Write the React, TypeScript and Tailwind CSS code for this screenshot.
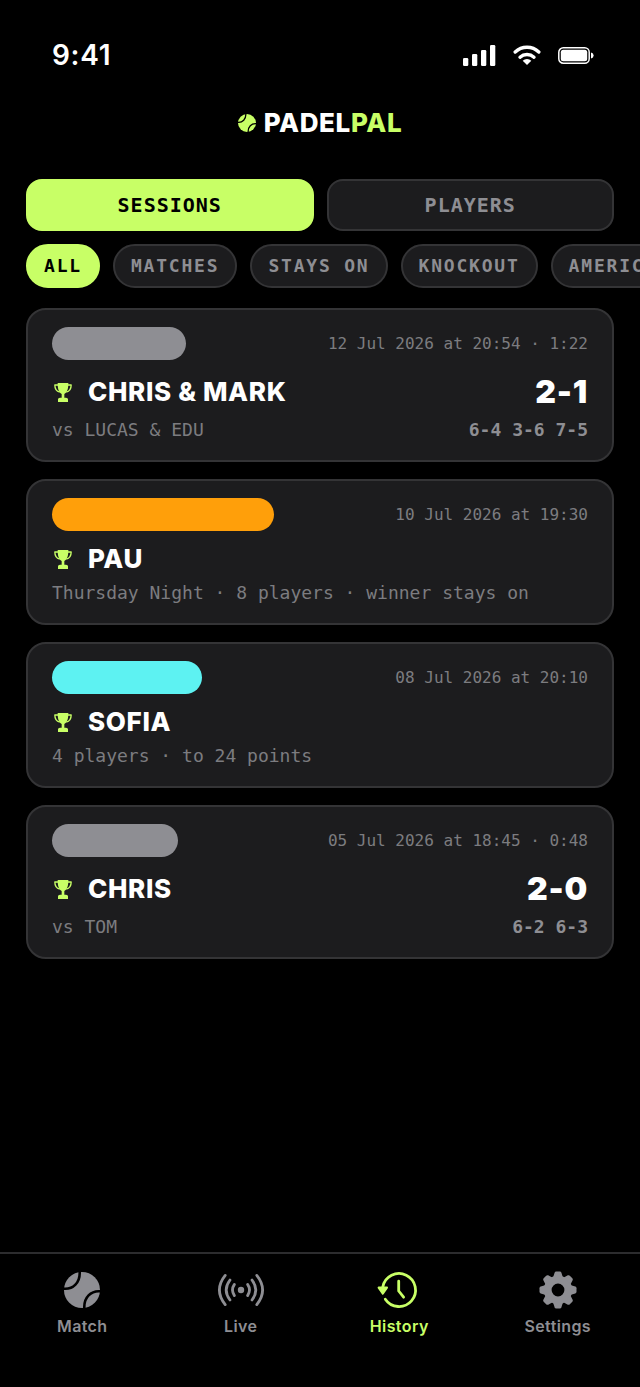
import { useState } from "react";
import clsx from "clsx";

const mono = "font-['DejaVu_Sans_Mono',monospace]";

function BallIcon({ size, className }: { size: number; className?: string }) {
  return (
    <svg width={size} height={size} viewBox="0 0 36 36" className={className} aria-hidden="true">
      <circle cx="18" cy="18" r="18" fill="currentColor" />
      <g fill="none" stroke="#000" strokeWidth="2.6">
        <path d="M-1 16.6C9 17.8 16.6 10.5 15.6 -1" />
        <path d="M37 19.4C27 18.2 19.4 25.5 20.4 37" />
      </g>
    </svg>
  );
}

function TrophyIcon() {
  return (
    <svg width="18" height="19" viewBox="0 0 54 57" className="shrink-0 text-[#c8ff66]" aria-hidden="true">
      <path
        d="M11 0H43C43 18 40 28 31 33V44H36Q42 44 42 49V57H12V49Q12 44 18 44H23V33C14 28 11 18 11 0Z"
        fill="currentColor"
      />
      <path
        d="M13 6H2.5C2.5 17 7 25 17 27M41 6H51.5C51.5 17 47 25 37 27"
        fill="none"
        stroke="currentColor"
        strokeWidth="4"
        strokeLinejoin="round"
      />
    </svg>
  );
}

function LiveIcon() {
  return (
    <svg width="48" height="36" viewBox="-24 -18 48 36" fill="none" aria-hidden="true">
      <circle r="3.2" fill="currentColor" />
      <g stroke="currentColor" strokeWidth="2.8" strokeLinecap="round">
        <path d="M-6.6 -5.6Q-10.4 0 -6.6 5.6M6.6 -5.600Q10.4 0 6.6 5.6" />
        <path d="M-11 -10Q-18.6 0 -11 10M11 -10Q18.6 0 11 10" />
        <path d="M-15.8 -14.6Q-27.4 0 -15.8 14.6M15.8 -14.6Q27.4 0 15.8 14.6" />
      </g>
    </svg>
  );
}

function HistoryIcon() {
  return (
    <svg width="44" height="40" viewBox="-22 -20 44 40" fill="none" aria-hidden="true">
      <g stroke="currentColor" strokeWidth="2.8" strokeLinecap="round" strokeLinejoin="round">
        <path d="M-13.7 9.2A16.5 16.5 0 1 0 -16.2 -3" />
        <path d="M-0.3 -8.8V1L4.6 7.2" />
      </g>
      <path
        d="M-20.4 -2.4H-12L-16.2 3.8Z"
        fill="currentColor"
        stroke="currentColor"
        strokeWidth="2"
        strokeLinejoin="round"
      />
    </svg>
  );
}

function GearIcon() {
  return (
    <svg width="40" height="40" viewBox="-20 -20 40 40" aria-hidden="true">
      <circle r="10.3" fill="none" stroke="currentColor" strokeWidth="7.8" />
      {[0, 45, 90, 135, 180, 225, 270, 315].map((angle) => (
        <path
          key={angle}
          transform={`rotate(${angle})`}
          d="M-4.8 -13L-3.4 -17.3Q-3 -18.5 -1.8 -18.5H1.8Q3 -18.5 3.4 -17.3L4.8 -13Z"
          fill="currentColor"
        />
      ))}
    </svg>
  );
}

function StatusBar() {
  return (
    <div className="flex items-center justify-between pt-[35px] pr-[46px] pl-[52px]">
      <span className="text-[28px] leading-10 font-semibold tracking-wide">9:41</span>
      <div className="flex items-center gap-[17px]">
        <svg width="33" height="21" viewBox="0 0 33 21" fill="currentColor" aria-hidden="true">
          <rect x="0" y="13" width="5.3" height="8" rx="1.3" />
          <rect x="9" y="9" width="5.3" height="12" rx="1.3" />
          <rect x="18" y="5" width="5.3" height="16" rx="1.3" />
          <rect x="27" y="0" width="5.3" height="21" rx="1.3" />
        </svg>
        <svg width="28" height="20" viewBox="-14 0 28 20" fill="none" aria-hidden="true">
          <g stroke="currentColor" strokeWidth="3.4" strokeLinecap="round">
            <path d="M-11.8 7A17 17 0 0 1 11.8 7" />
            <path d="M-7 12.2A10.5 10.5 0 0 1 7 12.2" />
          </g>
          <path d="M-4.3 15.8A6.2 6.2 0 0 1 4.3 15.8L0 20Z" fill="currentColor" />
        </svg>
        <svg width="36" height="17" viewBox="0 0 36 17" fill="none" aria-hidden="true">
          <rect x="0.8" y="0.8" width="30.4" height="15.4" rx="4.5" stroke="currentColor" strokeWidth="1.5" />
          <rect x="2.8" y="2.8" width="26.4" height="11.4" rx="2.5" fill="currentColor" />
          <path d="M33 5.5Q35.6 6.2 35.6 8.5T33 11.5Z" fill="currentColor" />
        </svg>
      </div>
    </div>
  );
}

const filters = ["ALL", "MATCHES", "STAYS ON", "KNOCKOUT", "AMERICANO"];

const sessions = [
  {
    badge: "w-[134px] bg-[#8e8e93]",
    date: "12 Jul 2026 at 20:54 · 1:22",
    winner: "CHRIS & MARK",
    detail: "vs LUCAS & EDU",
    score: "2-1",
    sets: "6-4 3-6 7-5",
  },
  {
    badge: "w-[222px] bg-[#ff9f0a]",
    date: "10 Jul 2026 at 19:30",
    winner: "PAU",
    detail: "Thursday Night · 8 players · winner stays on",
  },
  {
    badge: "w-[150px] bg-[#5df2f2]",
    date: "08 Jul 2026 at 20:10",
    winner: "SOFIA",
    detail: "4 players · to 24 points",
  },
  {
    badge: "w-[126px] bg-[#8e8e93]",
    date: "05 Jul 2026 at 18:45 · 0:48",
    winner: "CHRIS",
    detail: "vs TOM",
    score: "2-0",
    sets: "6-2 6-3",
  },
];

function SessionCard({ session }: { session: (typeof sessions)[number] }) {
  return (
    <li className="rounded-[20px] border-2 border-[#343436] bg-[#1c1c1e] px-6 pt-[17px] pb-[18px]">
      <div className={clsx("flex items-center justify-between", mono)}>
        <span className={clsx("h-[33px] rounded-full", session.badge)} />
        <time className="text-base text-[#7c7c80]">{session.date}</time>
      </div>
      <div className="mt-3 flex items-center justify-between">
        <div className="flex items-center gap-4 pl-0.5">
          <TrophyIcon />
          <h2 className="text-[26px] leading-8 font-extrabold tracking-wide">{session.winner}</h2>
        </div>
        {session.score && (
          <span className="text-[32px] leading-10 font-black tracking-wide">{session.score}</span>
        )}
      </div>
      <div className={clsx("mt-1.5 flex justify-between text-lg leading-6 text-[#7c7c80]", mono)}>
        <p>{session.detail}</p>
        {session.sets && <p className="font-bold text-[#8e8e93]">{session.sets}</p>}
      </div>
    </li>
  );
}

const tabs = [
  { title: "Match", icon: <BallIcon size={36} /> },
  { title: "Live", icon: <LiveIcon /> },
  { title: "History", icon: <HistoryIcon /> },
  { title: "Settings", icon: <GearIcon /> },
];

export default function App() {
  const [view, setView] = useState("SESSIONS");
  const [filter, setFilter] = useState("ALL");
  const [tab, setTab] = useState("History");

  return (
    <div className="flex min-h-screen flex-col overflow-hidden bg-black font-[Inter,sans-serif] text-white">
      <StatusBar />
      <header className="mt-7 flex h-10 items-center justify-center gap-2">
        <BallIcon size={18} className="text-[#c8ff66]" />
        <h1 className="text-[26px] leading-10 font-extrabold tracking-wide">
          PADEL<span className="text-[#c8ff66]">PAL</span>
        </h1>
      </header>

      <main className="mt-9 px-[26px]">
        <div className="grid grid-cols-2 gap-[13px]">
          {["SESSIONS", "PLAYERS"].map((name) => (
            <button
              key={name}
              type="button"
              aria-pressed={view === name}
              onClick={() => setView(name)}
              className={clsx(
                "h-[52px] rounded-2xl border-2 text-xl font-bold tracking-wider",
                mono,
                view === name
                  ? "border-[#c8ff66] bg-[#c8ff66] text-black"
                  : "border-[#343436] bg-[#1c1c1e] text-[#8e8e93]"
              )}
            >
              {name}
            </button>
          ))}
        </div>

        <div className="-mr-[26px] mt-[13px] flex gap-[13px] overflow-x-auto [scrollbar-width:none]">
          {filters.map((name) => (
            <button
              key={name}
              type="button"
              aria-pressed={filter === name}
              onClick={() => setFilter(name)}
              className={clsx(
                "h-11 shrink-0 rounded-full border-2 px-4 text-lg leading-6 font-bold tracking-widest",
                mono,
                filter === name
                  ? "border-[#c8ff66] bg-[#c8ff66] text-black"
                  : "border-[#343436] bg-[#1c1c1e] text-[#8e8e93]"
              )}
            >
              {name}
            </button>
          ))}
        </div>

        <ul className="mt-5 flex flex-col gap-[17px] pb-6">
          {sessions.map((session) => (
            <SessionCard key={session.date} session={session} />
          ))}
        </ul>
      </main>

      <nav className="mt-auto grid grid-cols-4 border-t-2 border-[#2c2c2e] px-[3px] pt-4 pb-[49px]">
        {tabs.map((item) => (
          <button
            key={item.title}
            type="button"
            aria-current={tab === item.title ? "page" : undefined}
            onClick={() => setTab(item.title)}
            className={clsx(
              "flex flex-col items-center gap-1",
              tab === item.title ? "text-[#c8ff66]" : "text-[#8e8e93]"
            )}
          >
            <span className="flex h-10 items-center">{item.icon}</span>
            <span className="text-base leading-6 font-semibold tracking-wide">{item.title}</span>
          </button>
        ))}
      </nav>
    </div>
  );
}
